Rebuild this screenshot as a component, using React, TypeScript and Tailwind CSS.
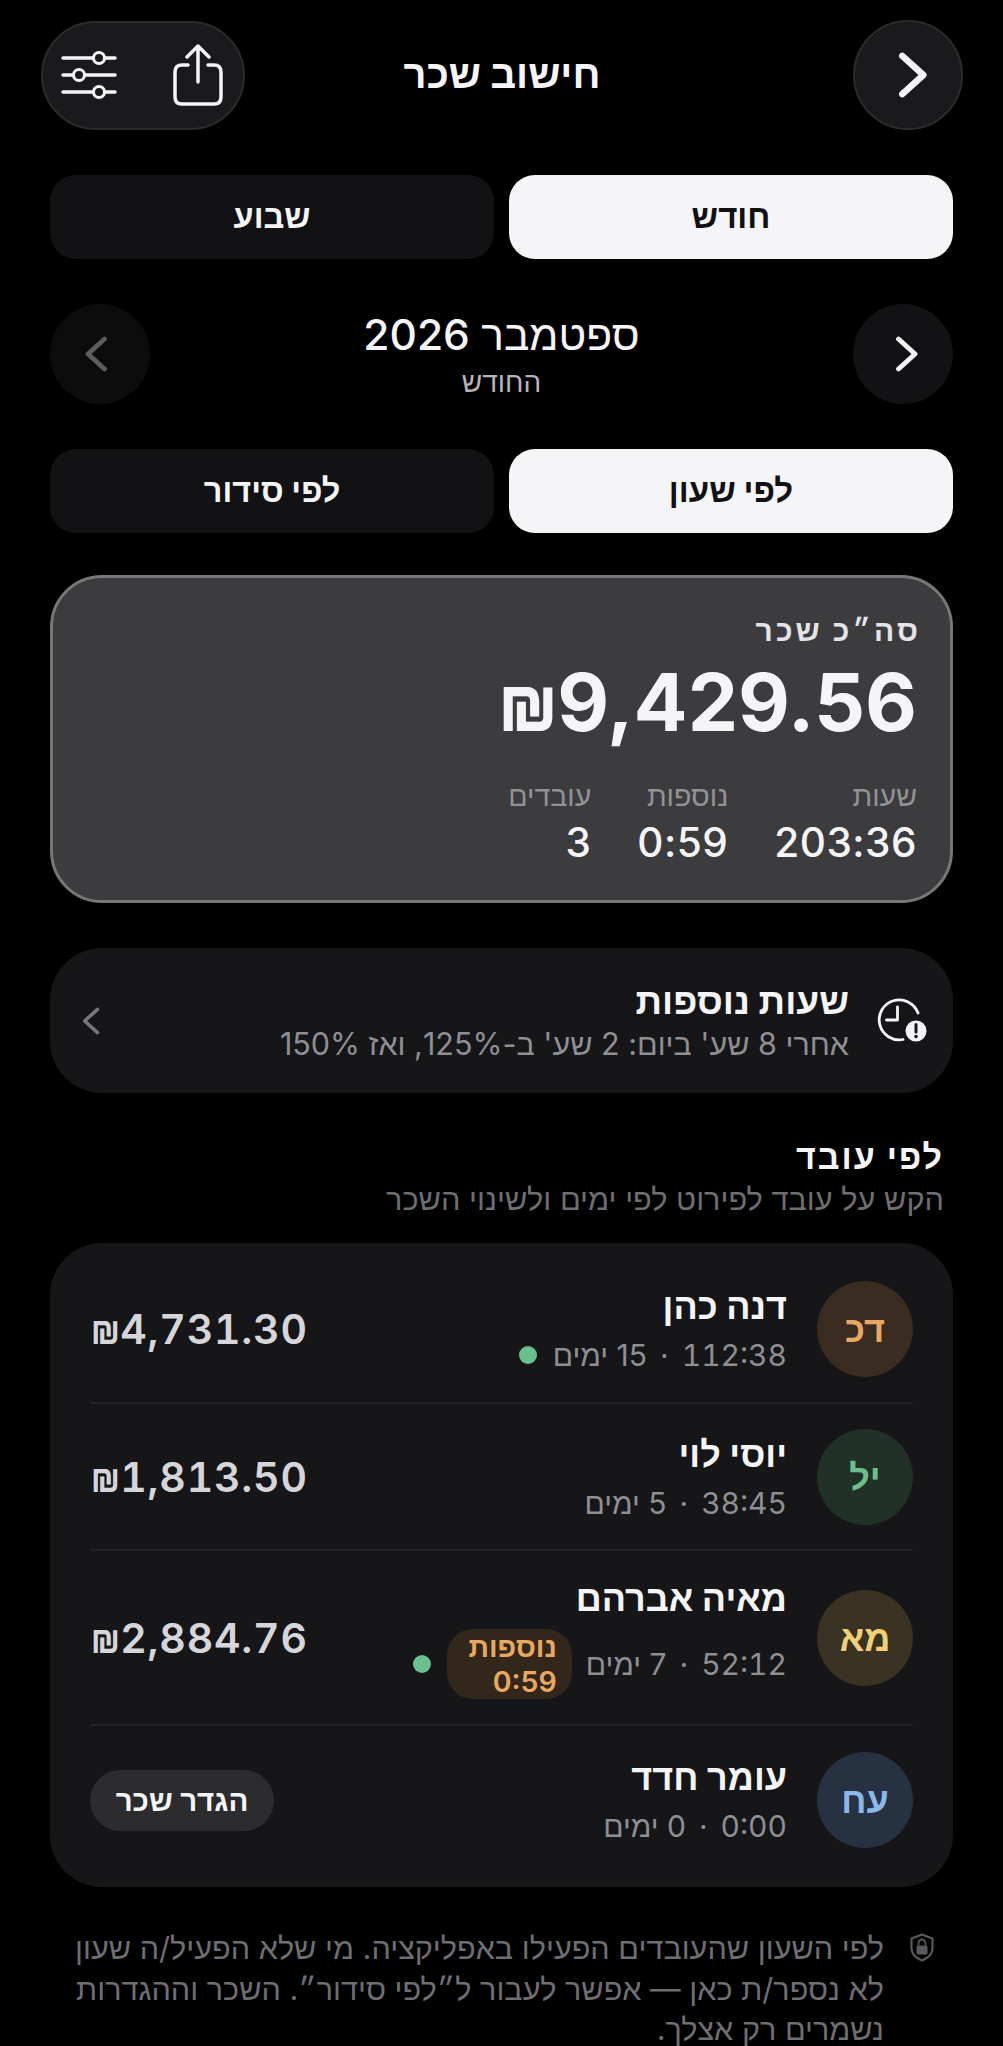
import React from "react";

const font = { fontFamily: 'Inter, "Liberation Sans", sans-serif' };

function Chevron({ size, sw, color, left }: { size: number; sw: number; color: string; left?: boolean }) {
  return (
    <svg width={size} height={size} viewBox="0 0 24 24" fill="none" stroke={color} strokeWidth={sw} strokeLinecap="round" strokeLinejoin="round">
      <path d={left ? "M15 2 L4 12 L15 22" : "M9 2 L20 12 L9 22"} />
    </svg>
  );
}

function Sliders() {
  return (
    <svg width="56" height="48" viewBox="0 0 56 48" fill="none" stroke="#f5f5f7" strokeWidth="3.5" strokeLinecap="round">
      <path d="M2 7H54M2 24H54M2 41H54" />
      <circle cx="38" cy="7" r="5.5" fill="#1a1a1c" strokeWidth="3" />
      <circle cx="18" cy="24" r="5.5" fill="#1a1a1c" strokeWidth="3" />
      <circle cx="38" cy="41" r="5.5" fill="#1a1a1c" strokeWidth="3" />
    </svg>
  );
}

function Share() {
  return (
    <svg width="50" height="62" viewBox="0 0 50 62" fill="none" stroke="#f5f5f7" strokeWidth="3.5" strokeLinecap="round" strokeLinejoin="round">
      <path d="M25 38V3M14 13L25 2L36 13" />
      <path d="M15 21H9Q2 21 2 28V53Q2 60 9 60H41Q48 60 48 53V28Q48 21 41 21H35" />
    </svg>
  );
}

function ClockAlert() {
  return (
    <svg width="52" height="46" viewBox="0 0 52 46" fill="none">
      <path d="M42 15A20 20 0 1 0 27 41.5" stroke="#f5f5f7" strokeWidth="2.8" strokeLinecap="round" />
      <path d="M21.5 9V22H10.5" stroke="#f5f5f7" strokeWidth="2.8" strokeLinecap="round" strokeLinejoin="round" />
      <circle cx="40" cy="33" r="10.5" fill="#f5f5f7" />
      <path d="M40 26.5V34" stroke="#161618" strokeWidth="3" strokeLinecap="round" />
      <circle cx="40" cy="38.5" r="1.8" fill="#161618" />
    </svg>
  );
}

function ShieldLock() {
  return (
    <svg width="24" height="29" viewBox="0 0 24 29" fill="none">
      <path d="M12 1.5L22.5 5.5V15.5C22.5 21 18 25 12 27.5C6 25 1.5 21 1.5 15.5V5.5Z" stroke="#5a5a5e" strokeWidth="2.2" strokeLinejoin="round" />
      <rect x="6.5" y="12.5" width="11" height="9" rx="1.5" fill="#5a5a5e" />
      <path d="M8.5 12.5V10A3.5 3.5 0 0 1 15.5 10V12.5" stroke="#5a5a5e" strokeWidth="1.8" />
    </svg>
  );
}

function Toggle({ a, b }: { a: string; b: string }) {
  return (
    <div className="flex gap-[15px]">
      <div className="flex h-[84px] flex-1 items-center justify-center rounded-[26px] bg-[#f5f5f7] text-[33px] font-bold text-[#111113]">{a}</div>
      <div className="flex h-[84px] flex-1 items-center justify-center rounded-[26px] bg-[#121214] text-[32.5px] font-bold text-[#f5f5f7]">{b}</div>
    </div>
  );
}

function Stat({ label, value }: { label: string; value: string }) {
  return (
    <div className="flex flex-col items-start">
      <div className="text-[28.5px] leading-[32px] text-[#929296]">{label}</div>
      <div className="mt-[8px] text-[40.5px] font-medium leading-[46px] tracking-[0.5px] text-[#f5f5f7]" dir="ltr">{value}</div>
    </div>
  );
}

function Money({ value, symbol }: { value: string; symbol: string }) {
  return (
    <span dir="ltr" className="inline-block">
      <span className={`inline-block origin-right scale-x-[0.78] ${symbol}`}>₪</span>
      {value}
    </span>
  );
}

function Row({
  initials, bg, fg, name, hours, days, amount, dot, badge, action, h, last,
}: {
  initials: string; bg: string; fg: string; name: string; hours: string; days: string; amount?: string;
  dot?: boolean; badge?: boolean; action?: boolean; h: string; last?: boolean;
}) {
  return (
    <div className={`flex items-center ${h} ${last ? "" : "border-b-2 border-[#222224]"}`}>
      <div className={`flex h-[96px] w-[96px] shrink-0 items-center justify-center rounded-full text-[36px] font-bold ${bg} ${fg}`}>{initials}</div>
      <div className="mr-[30px] flex flex-1 flex-col items-start">
        <div className="text-[36px] font-bold leading-[42px] text-[#f5f5f7]">{name}</div>
        <div className="mt-[10px] flex items-center text-[30px] leading-[36px] text-[#8e8e93]">
          <span className="tabular-nums">{hours}</span>
          <span className="mx-[13px]">·</span>
          <span>{days}</span>
          {badge && (
            <span className="mr-[14px] flex h-[70px] flex-col items-start justify-center rounded-[26px] bg-[#33271c] pl-[22px] pr-[15px] text-[28.5px] font-semibold leading-[35px] text-[#e8a860]">
              <span>נוספות</span>
              <span dir="ltr">0:59</span>
            </span>
          )}
          {dot && <span className="mr-[16px] h-[18px] w-[18px] rounded-full bg-[#6cc08b]" />}
        </div>
      </div>
      {amount && (
        <div className="pt-[3px] text-[41px] font-semibold tracking-[0.8px] tabular-nums text-[#d6d6da]">
          <Money value={amount} symbol="ml-[-7px]" />
        </div>
      )}
      {action && (
        <div className="flex h-[61px] w-[184px] items-center justify-center rounded-full bg-[#2c2c2e] text-[29.5px] font-semibold text-[#f5f5f7]">הגדר שכר</div>
      )}
    </div>
  );
}

export default function App() {
  return (
    <div dir="rtl" style={font} className="h-[2046px] w-[1003px] overflow-hidden bg-black">
      <header className="grid grid-cols-[1fr_auto_1fr] items-center pl-[41px] pr-[40px] pt-[20px]">
        <button className="flex h-[110px] w-[110px] items-center justify-center justify-self-start rounded-full border-2 border-[#2b2b2d] bg-[#1a1a1c]">
          <Chevron size={46} sw={3.4} color="#f5f5f7" />
        </button>
        <h1 className="pb-[2px] text-[40px] font-bold text-[#f5f5f7]">חישוב שכר</h1>
        <div className="flex h-[109px] w-[204px] items-center justify-between justify-self-end rounded-full border-2 border-[#2b2b2d] bg-[#1a1a1c] pl-[18px] pr-[20px]">
          <Share />
          <Sliders />
        </div>
      </header>

      <main className="px-[50px]">
        <div className="mt-[45px]"><Toggle a="חודש" b="שבוע" /></div>

        <div className="mt-[45px] flex items-center justify-between">
          <div className="flex h-[100px] w-[100px] items-center justify-center rounded-full bg-[#121214]">
            <Chevron size={36} sw={3.2} color="#f5f5f7" />
          </div>
          <div className="flex flex-col items-center pb-[5px]">
            <div className="text-[42.5px] font-medium leading-[60px] text-[#f5f5f7]">ספטמבר 2026</div>
            <div className="text-[28px] leading-[34px] text-[#b5b5ba]">החודש</div>
          </div>
          <div className="flex h-[100px] w-[100px] items-center justify-center rounded-full bg-[#0c0c0d]">
            <Chevron size={36} sw={3.2} color="#5c5c60" left />
          </div>
        </div>

        <div className="mt-[45px]"><Toggle a="לפי שעון" b="לפי סידור" /></div>

        <section className="mt-[42px] h-[328px] rounded-[52px] border-[3px] border-[#77777a] bg-[#3c3c3e] pl-[30px] pr-[33px] pt-[32px]">
          <div className="mr-[-4px] text-[30px] font-bold leading-[40px] tracking-[3px] text-[#e4e4e8]">סה״כ שכר</div>
          <div className="mt-[7px] text-[80px] font-bold leading-[90px] text-[#f5f5f7]">
            <Money value="9,429.56" symbol="ml-[-14px]" />
          </div>
          <div className="mt-[33px] flex gap-[46px]">
            <Stat label="שעות" value="203:36" />
            <Stat label="נוספות" value="0:59" />
            <Stat label="עובדים" value="3" />
          </div>
        </section>

        <section className="mt-[45px] flex h-[145px] items-center rounded-[52px] bg-[#161618] pl-[30px] pr-[25px]">
          <ClockAlert />
          <div className="mr-[27px] flex-1">
            <div className="text-[37px] font-bold leading-[44px] text-[#f5f5f7]">שעות נוספות</div>
            <div className="mt-[3px] text-[30.5px] leading-[36px] text-[#8e8e93]">אחרי 8 שע' ביום: 2 שע' ב-125%, ואז 150%</div>
          </div>
          <Chevron size={28} sw={3} color="#77777a" left />
        </section>

        <section className="mt-[42px] pr-[9px]">
          <div className="text-[34px] font-bold leading-[44px] tracking-[2px] text-[#f5f5f7]">לפי עובד</div>
          <div className="mt-[1px] text-[30.7px] leading-[38px] text-[#6e6e73]">הקש על עובד לפירוט לפי ימים ולשינוי השכר</div>
        </section>

        <section className="mt-[25px] h-[644px] rounded-[52px] bg-[#161618] px-[40px] pt-[12px]">
          <Row h="h-[149px]" initials="דכ" bg="bg-[#3a2c20]" fg="text-[#e8a860]" name="דנה כהן" hours="112:38" days="15 ימים" amount="4,731.30" dot />
          <Row h="h-[147px]" initials="יל" bg="bg-[#213127]" fg="text-[#6cc08b]" name="יוסי לוי" hours="38:45" days="5 ימים" amount="1,813.50" />
          <Row h="h-[175px]" initials="מא" bg="bg-[#3a3223]" fg="text-[#f0cf78]" name="מאיה אברהם" hours="52:12" days="7 ימים" amount="2,884.76" dot badge />
          <Row h="h-[148px]" initials="עח" bg="bg-[#263142]" fg="text-[#8ab8e8]" name="עומר חדד" hours="0:00" days="0 ימים" action last />
        </section>

        <section className="mt-[41px] flex items-start pr-[19px]">
          <div className="mt-[5px] shrink-0"><ShieldLock /></div>
          <p className="mr-[26px] w-[820px] text-[30.6px] leading-[40.5px] text-[#6e6e73]">
            לפי השעון שהעובדים הפעילו באפליקציה. מי שלא הפעיל/ה שעון לא נספר/ת כאן — אפשר לעבור ל״לפי סידור״. השכר וההגדרות נשמרים רק אצלך.
          </p>
        </section>
      </main>
    </div>
  );
}
